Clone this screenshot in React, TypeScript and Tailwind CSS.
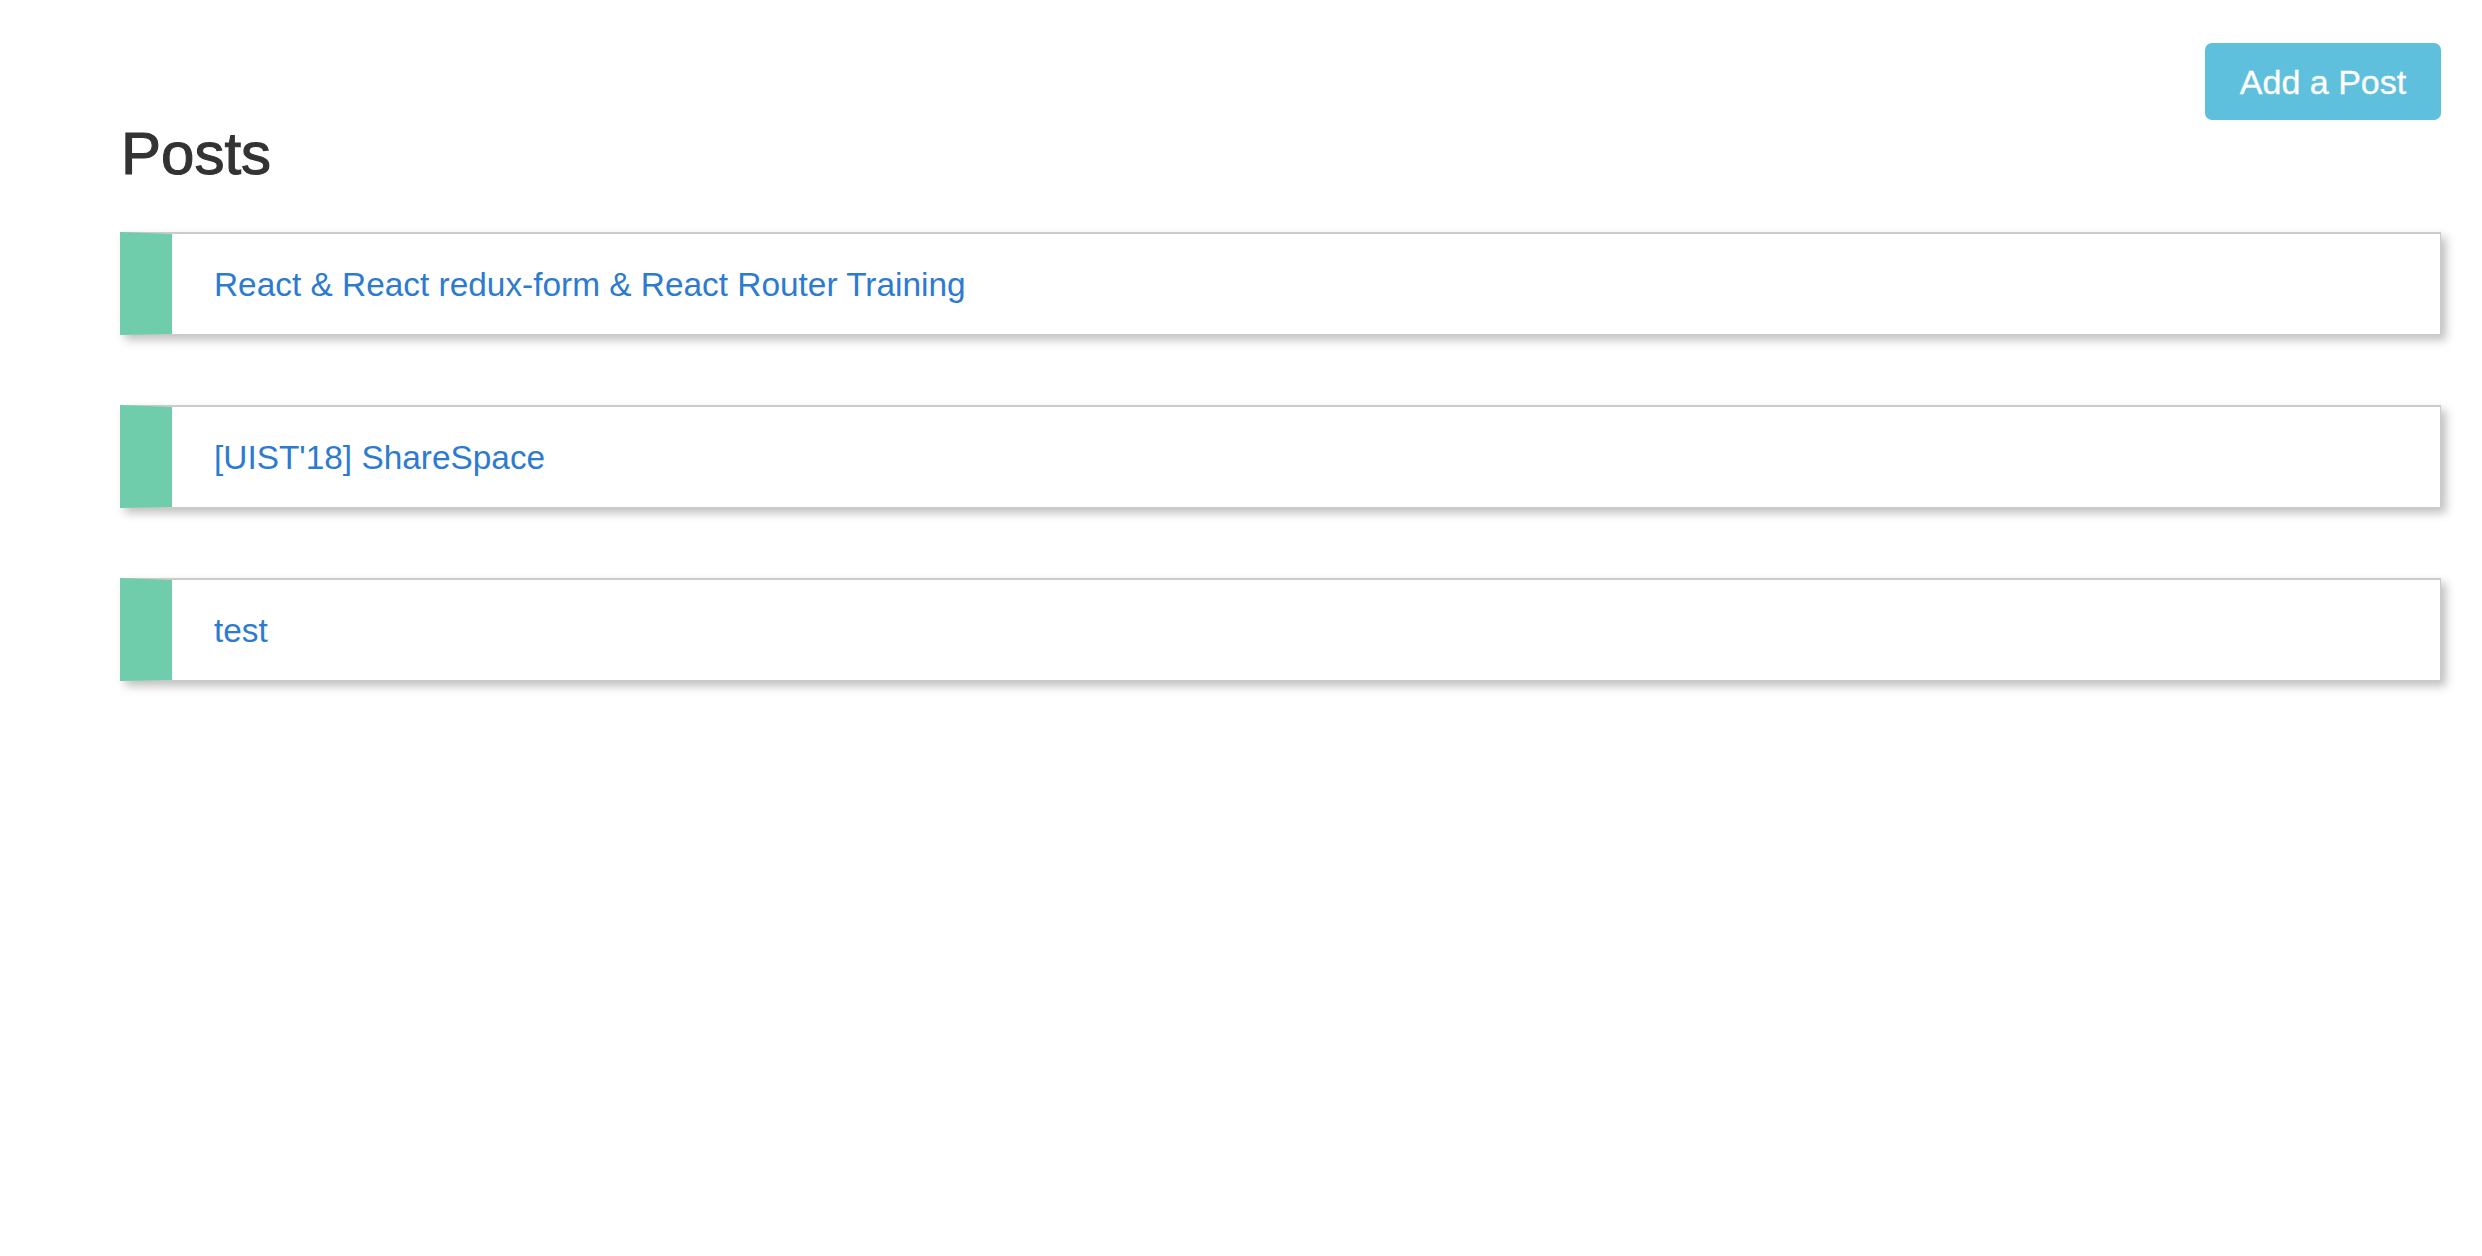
import React from "react";

const posts = [
  "React & React redux-form & React Router Training",
  "[UIST'18] ShareSpace",
  "test",
];

export default function App() {
  return (
    <div
      className="min-h-screen w-full bg-white pl-[120px] pr-[41px] pt-[43px]"
      style={{ fontFamily: '"Liberation Sans", Arial, Helvetica, sans-serif' }}
    >
      <div className="flex justify-end">
        <button className="h-[77px] w-[236px] rounded-[7px] bg-[#5fc0de] text-[34px] leading-none text-white [-webkit-text-stroke:0.3px_#ffffff]">
          Add a Post
        </button>
      </div>
      <h1 className="mt-[4px] pl-[1px] text-[60px] leading-[59px] font-normal text-[#333333] [-webkit-text-stroke:1.1px_#333333]">
        Posts
      </h1>
      <div className="mt-[49px] flex flex-col gap-[70px]">
        {posts.map((p) => (
          <div
            key={p}
            className="flex h-[103px] items-center border border-t-2 border-l-[52px] border-[#cbcbcb] border-l-[#6fcdab] bg-white pl-[42px] pt-[2px] shadow-[5px_5px_9px_rgba(0,0,0,0.25)]"
          >
            <a href="#" className="text-[33.4px] leading-none text-[#2d7bd0]">
              {p}
            </a>
          </div>
        ))}
      </div>
    </div>
  );
}
